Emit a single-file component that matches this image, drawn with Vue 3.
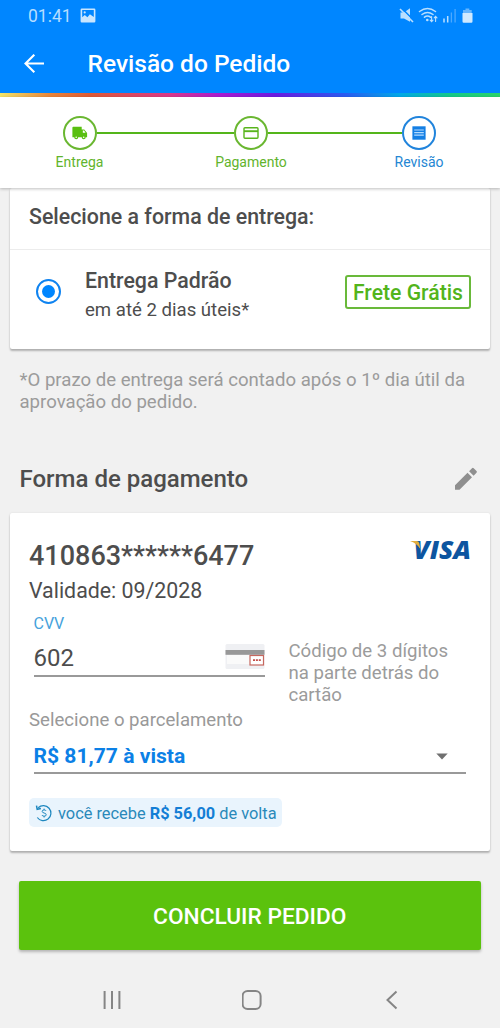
<script setup>
const steps = [
  { label: 'Entrega', icon: 'truck', current: false },
  { label: 'Pagamento', icon: 'card', current: false },
  { label: 'Revisão', icon: 'receipt', current: true },
]
</script>

<template>
  <div class="screen">
    <header class="top">
      <div class="status">
        <span class="clock">01:41</span>
        <svg class="pic" width="16" height="15" viewBox="0 0 16 15">
          <path fill-rule="evenodd" fill="#c9e6ff" d="M1.8 .5h12.400a1.200 1.200 0 0 1 1.200 1.200v11.600a1.200 1.200 0 0 1-1.200 1.200H1.800a1.200 1.200 0 0 1-1.200-1.200V1.700A1.200 1.200 0 0 1 1.800 .5zM2.200 2v7.300l2.600-2.300 2.600 2.300 2.500-3.100L13.800 9V2zM4.700 3.300a1.100 1.100 0 1 1 0 2.200 1.100 1.100 0 0 1 0-2.200z" />
        </svg>
        <svg class="tray" width="76" height="18" viewBox="0 0 76 18">
          <g fill="#b9dfff">
            <path d="M1.500 5.500h3.500L11 1.200v13.600L5 11.500H1.500z" />
            <path d="M2.500 1l12.500 12.500" stroke="#0086ff" stroke-width="1.600" />
            <path d="M1 2l13 13" stroke="#b9dfff" stroke-width="1.600" />
          </g>
          <g fill="none" stroke="#b9dfff" stroke-width="1.500" stroke-linecap="round">
            <path d="M20.500 4.500q8-6.200 16 0M23 7.500q5.500-4.200 11 0M25.500 10.200q3-2.200 6 0" />
            <path stroke-width="1.100" d="M32.600 9.500v5M31.200 13.200l1.400 1.500 1.400-1.500M36.600 14.500v-5M35.200 10.800l1.400-1.500 1.400 1.500" />
          </g>
          <circle cx="28.300" cy="13" r="1.300" fill="#b9dfff" />
          <path d="M45 11.500v4M48.700 9v6.500" stroke="#b9dfff" stroke-width="1.500" />
          <path d="M52.400 5.500v10M56.100 2v13.500" stroke="#4ca9ff" stroke-width="1.300" />
          <path d="M66.500 1.500h3.800V3h2.400v3H64V3h2.500z" fill="#66b6ff" />
          <path d="M63.500 6h10v8.500a1.200 1.200 0 0 1-1.200 1.200h-7.600a1.200 1.200 0 0 1-1.200-1.200z" fill="#cfe9ff" />
        </svg>
      </div>
      <div class="bar">
        <svg width="22" height="20" viewBox="0 0 22 20" fill="none" stroke="#fff" stroke-width="2.100">
          <path d="M21 9.500H3M11.300 .7L2.500 9.500l8.800 8.800" />
        </svg>
        <h1>Revisão do Pedido</h1>
      </div>
    </header>
    <div class="rainbow"></div>

    <nav class="stepper">
      <template v-for="(step, i) in steps" :key="step.label">
        <span v-if="i" class="link" :class="{ last: step.current }"></span>
        <div class="step" :class="{ current: step.current }">
          <span class="ring">
            <svg v-if="step.icon === 'truck'" width="16" height="14" viewBox="0 0 16 14">
              <path fill="#59bf10" d="M1.300 .8h8.400v2.600h2.500l2.900 3.700v4.100h-1.400a2 2 0 0 1-4 0H6.200a2 2 0 0 1-4 0H.4V1.700a.9.900 0 0 1 .9-.9z" />
              <path fill="#fff" d="M10.800 4.600h1.200l1.600 2.200h-2.800z" />
              <circle cx="4.200" cy="11.200" r=".8" fill="#fff" />
              <circle cx="11.700" cy="11.200" r=".8" fill="#fff" />
            </svg>
            <svg v-else-if="step.icon === 'card'" width="16" height="12" viewBox="0 0 16 12">
              <rect x="1" y=".8" width="14" height="10.400" rx=".9" fill="none" stroke="#59b51c" stroke-width="1.400" />
              <path d="M1 4.200h14" stroke="#59b51c" stroke-width="1.900" />
            </svg>
            <svg v-else width="14" height="14" viewBox="0 0 14 14">
              <rect x=".4" y=".3" width="13.200" height="13.400" fill="#147fe4" />
              <path d="M2.200 4h9.600M2.200 6.600h9.600M2.200 9.200h9.600" stroke="#b5dcff" stroke-width="1.200" />
            </svg>
          </span>
          <span class="label">{{ step.label }}</span>
        </div>
      </template>
    </nav>

    <section class="card shipping">
      <h2 class="ship-title">Selecione a forma de entrega:</h2>
      <div class="option">
        <span class="radio"><i></i></span>
        <div class="option-text">
          <strong>Entrega Padrão</strong>
          <span>em até 2 dias úteis*</span>
        </div>
        <span class="free">Frete Grátis</span>
      </div>
    </section>

    <p class="note">*O prazo de entrega será contado após o 1º dia útil da<br />aprovação do pedido.</p>

    <div class="pay-head">
      <h2>Forma de pagamento</h2>
      <svg width="24" height="24" viewBox="0 0 24 24">
        <path fill="#8f8f8f" d="M1 18.300v4.500h4.500L18 10.300 13.500 5.800zM22.500 5.800a1.200 1.200 0 0 0 0-1.700l-2.800-2.800a1.200 1.200 0 0 0-1.700 0l-2.900 2.900 4.500 4.500z" />
      </svg>
    </div>

    <section class="card payment">
      <div class="number-row">
        <span class="number">410863******6477</span>
        <svg class="visa" width="66" height="46" viewBox="0 -10 66 46">
          <text x="4.500" y="20.700" textLength="57.500" lengthAdjust="spacingAndGlyphs">VISA</text>
          <path d="M1 3h6.500q2.200 0 2.700 2.100L11.400 11Q7.500 5 1 3z" fill="#e3ad3c" />
        </svg>
      </div>
      <div class="expiry">Validade: 09/2028</div>
      <div class="cvv-row">
        <div class="cvv">
          <span class="cvv-label">CVV</span>
          <div class="cvv-field">
            <span>602</span>
            <svg width="40" height="26" viewBox="0 0 40 26">
              <rect x=".5" width="39" height="25" rx="1.500" fill="#eff0f3" />
              <rect x="2" y="11" width="24" height="9" fill="#fafafa" />
              <rect x=".5" y="6" width="39" height="4.800" fill="#989898" />
              <rect x="25" y="11.500" width="13.500" height="9.500" fill="#fff" stroke="#c6685f" stroke-width="1.200" />
              <path d="M28 16.200h2M30.900 16.200h2M33.800 16.200h2" stroke="#c34f48" stroke-width="1.700" />
            </svg>
          </div>
        </div>
        <p class="hint">Código de 3 dígitos<br />na parte detrás do<br />cartão</p>
      </div>
      <div class="inst-label">Selecione o parcelamento</div>
      <div class="select">
        <span>R$ 81,77 à vista</span>
        <svg width="12" height="7" viewBox="0 0 12 7"><path d="M.3 .5h11.400L6 6.500z" fill="#707070" /></svg>
      </div>
      <div class="cashback">
        <svg width="18" height="18" viewBox="0 0 18 18" fill="none" stroke="#1d87bf" stroke-width="1.200">
          <path d="M3.200 3.800A7.500 7.500 0 1 1 2.300 13.500" />
          <path d="M1.500 1.600l.7 3.700 3.700-.7" stroke-width="1.500" />
          <path d="M11.100 6.900Q10.700 5.900 9.100 5.900 7.200 5.900 7.200 7.400 7.200 8.600 9.100 9 11.200 9.400 11.200 10.800 11.200 12.200 9.100 12.200 7.400 12.200 6.900 11M9.100 4.600v1.300M9.100 12.200v1.300" stroke-width="1" />
        </svg>
        <span>você recebe <b>R$ 56,00</b> de volta</span>
      </div>
    </section>

    <button class="submit">CONCLUIR PEDIDO</button>

    <footer class="nav">
      <svg width="20" height="20" viewBox="0 0 20 20" stroke="#858585" stroke-width="2">
        <path d="M2.600 1v18M10 1v18M17.400 1v18" />
      </svg>
      <svg width="20" height="20" viewBox="0 0 20 20">
        <rect x=".6" y="1" width="18" height="18" rx="5" fill="none" stroke="#858585" stroke-width="2" />
      </svg>
      <svg width="20" height="20" viewBox="0 0 20 20" fill="none" stroke="#858585" stroke-width="2">
        <path d="M14.500 1.500L5.500 10l9 8.500" />
      </svg>
    </footer>
  </div>
</template>

<style>
body {
  margin: 0;
  background: #f1f1f1;
}
</style>

<style scoped>
.screen {
  width: 500px;
  height: 1028px;
  overflow: hidden;
  display: flex;
  flex-direction: column;
  background: #f1f1f1;
  font-family: Roboto, sans-serif;
  color: #4d4d4d;
}
.screen * {
  box-sizing: border-box;
}
h1, h2, p {
  margin: 0;
  font-weight: 500;
}
svg {
  display: block;
  flex: none;
}
.top {
  height: 93px;
  flex: none;
  background: #0086ff;
}
.status {
  height: 32px;
  display: flex;
  align-items: center;
  padding: 0 25px 0 28px;
}
.clock {
  width: 52px;
  font-size: 17.500px;
  color: #b5ddff;
}
.pic {
  margin-top: -2px;
}
.tray {
  margin-left: auto;
}
.bar {
  height: 64px;
  display: flex;
  align-items: center;
  padding-left: 23px;
}
.bar h1 {
  margin: -2px 0 0 42.500px;
  font-size: 24.500px;
  color: #fff;
}
.rainbow {
  height: 4px;
  flex: none;
  background: linear-gradient(90deg, #f3e56a 0, #e8853a 50px, #dd5a35 90px, #d9388a 170px, #a81bd0 220px, #6a1be0 275px, #2a5bf0 345px, #00a8e8 400px, #14c88a 450px, #2ad46a 500px);
}
.stepper {
  height: 91px;
  flex: none;
  display: flex;
  align-items: flex-start;
  padding: 19px 64px 0 62.500px;
  background: #fff;
  box-shadow: 0 1px 3px rgba(0, 0, 0, 0.25);
  z-index: 1;
}
.step {
  width: 34px;
  display: flex;
  flex-direction: column;
  align-items: center;
  color: #62b42c;
}
.ring {
  width: 34px;
  height: 34px;
  border: 2px solid #6ab731;
  border-radius: 50%;
  display: flex;
  align-items: center;
  justify-content: center;
}
.label {
  margin-top: 3px;
  font-size: 14px;
  line-height: 18px;
  white-space: nowrap;
}
.current {
  color: #2486d3;
}
.current .ring {
  border-color: #2184dc;
}
.link {
  width: 137.500px;
  height: 2px;
  margin-top: 16px;
  background: #54b51a;
}
.link.last {
  width: 134px;
}
.card {
  flex: none;
  margin: 0 10px;
  background: #fff;
  border-radius: 2px;
  box-shadow: 0 2px 2px rgba(0, 0, 0, 0.26), 0 0 2px rgba(0, 0, 0, 0.1);
}
.shipping {
  height: 161px;
}
.ship-title {
  height: 62px;
  padding: 16px 0 0 19px;
  font-size: 21.350px;
  line-height: 25px;
  border-bottom: 1px solid #ececec;
}
.option {
  display: flex;
  padding: 18px 19px 0 26px;
}
.radio {
  width: 25px;
  height: 25px;
  margin-top: 11px;
  border: 2px solid #0f83f0;
  border-radius: 50%;
  display: flex;
  align-items: center;
  justify-content: center;
}
.radio i {
  width: 13px;
  height: 13px;
  border-radius: 50%;
  background: #0086ff;
}
.option-text {
  margin-left: 24px;
  display: flex;
  flex-direction: column;
}
.option-text strong {
  font-weight: 500;
  font-size: 21.350px;
  line-height: 26px;
}
.option-text span {
  margin-top: 4px;
  font-size: 18.600px;
  line-height: 24px;
}
.free {
  width: 126px;
  height: 34px;
  margin: 7px 0 0 auto;
  border: 2px solid #69b93a;
  border-radius: 3px;
  font-size: 21.200px;
  font-weight: 500;
  line-height: 32px;
  text-align: center;
  white-space: nowrap;
  color: #52b41b;
}
.note {
  height: 45px;
  margin: 20px 0 0 19.500px;
  font-size: 18.600px;
  font-weight: 400;
  line-height: 22px;
  color: #9b9b9b;
  white-space: nowrap;
}
.pay-head {
  height: 66px;
  margin: 32px 22px 0 19.500px;
  display: flex;
  align-items: center;
  justify-content: space-between;
}
.pay-head h2 {
  font-size: 24px;
}
.payment {
  margin-top: 1px;
  height: 338px;
  padding: 25px 19px 0;
}
.number-row {
  height: 37px;
  display: flex;
  justify-content: space-between;
}
.number {
  font-size: 27px;
  font-weight: 500;
  line-height: 37px;
}
.visa {
  margin: -10px -4px 0 0;
}
.visa text {
  font: italic 800 24px "Open Sans", sans-serif;
  fill: #0d55a0;
}
.expiry {
  font-size: 21.350px;
  line-height: 32px;
}
.cvv-row {
  height: 101px;
  display: flex;
}
.cvv {
  width: 231px;
  margin-left: 4.500px;
  padding-top: 8px;
}
.cvv-label {
  display: block;
  font-size: 16px;
  line-height: 18px;
  color: #46a2dc;
}
.cvv-field {
  height: 44px;
  padding-top: 7px;
  display: flex;
  align-items: center;
  justify-content: space-between;
  border-bottom: 2px solid #999;
  font-size: 24px;
}
.cvv-field svg {
  margin-top: -2px;
}
.hint {
  margin: 33px 0 0 24px;
  font-size: 18.600px;
  font-weight: 400;
  line-height: 22px;
  color: #9b9b9b;
  white-space: nowrap;
}
.inst-label {
  font-size: 18.600px;
  line-height: 24px;
  color: #999;
}
.select {
  height: 42px;
  margin: 0 5px 0 4.500px;
  padding: 7px 18px 0 0;
  display: flex;
  align-items: center;
  justify-content: space-between;
  border-bottom: 2px solid #999;
  font-size: 21.100px;
  font-weight: 700;
  color: #0b80e6;
}
.select svg {
  margin-top: 2px;
}
.cashback {
  width: 253px;
  height: 29px;
  margin-top: 24px;
  padding: 1px 0 0 6px;
  display: flex;
  align-items: center;
  gap: 5px;
  border-radius: 5px;
  background: #e9f4fd;
  font-size: 16.380px;
  color: #2989ba;
  white-space: nowrap;
}
.cashback b {
  color: #147ed5;
}
.submit {
  flex: none;
  height: 69px;
  margin: 30px 19.500px 0 19px;
  padding: 1px 0 0;
  border: 0;
  border-radius: 2px;
  background: #5bc20d;
  box-shadow: 0 2px 3px rgba(0, 0, 0, 0.25);
  font: 500 22.700px Roboto, sans-serif;
  color: #fff;
}
.nav {
  display: flex;
  justify-content: space-between;
  margin: 40px 98px 0 101.500px;
}
</style>
